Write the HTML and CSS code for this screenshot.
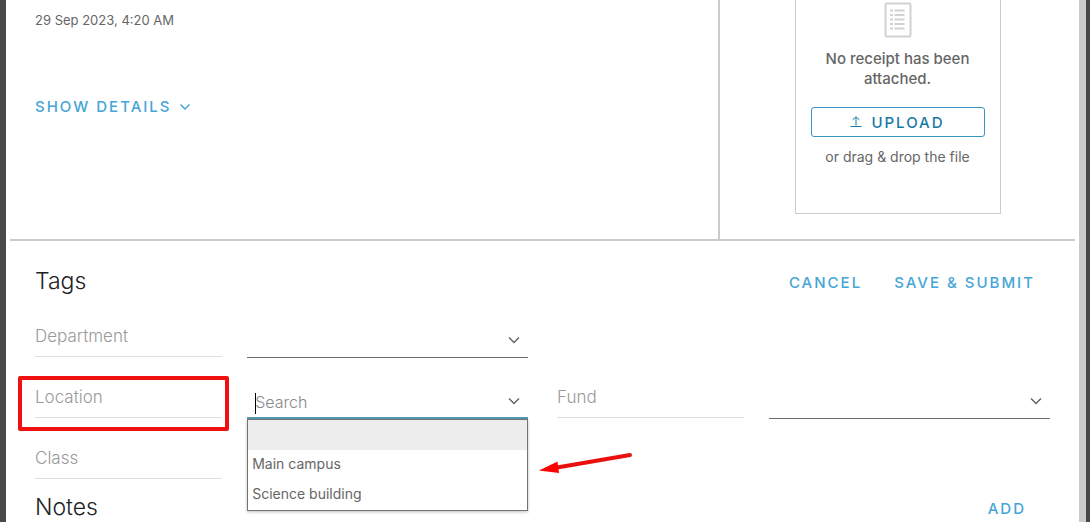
FILE: index.html
```html
<!DOCTYPE html>
<html lang="en">
<head>
  <meta charset="UTF-8">
  <meta name="viewport" content="width=device-width, initial-scale=1.0">
  <title>Transaction details</title>
  <link rel="stylesheet" href="styles.css">
</head>
<body>
  <main class="modal">
    <section class="summary">
      <div class="info">
        <p class="date">29 Sep 2023, 4:20 AM</p>
        <button class="link-btn details-btn" type="button">SHOW DETAILS
          <svg class="details-icon" width="12" height="8" viewBox="0 0 12 8"><path d="M1.500 1.500L6 6l4.500-4.500"/></svg>
        </button>
      </div>
      <div class="receipt-col">
        <div class="receipt">
          <svg class="receipt-icon" width="28" height="36" viewBox="0 0 28 36">
            <rect x="1.5" y="1.5" width="25" height="33" rx="1"/>
            <path d="M6 8.5h3M6 13h3M6 17.5h3M6 22h3M6 26.5h3M10.5 8.5h10M10.5 13h10M10.5 17.5h10M10.5 22h10M10.5 26.5h10"/>
          </svg>
          <p class="receipt-title">No receipt has been attached.</p>
          <button class="upload-btn" type="button">
            <svg width="12" height="12" viewBox="0 0 12 12"><path d="M6 9.5V1M2.5 4L6 .8 9.5 4M.5 10.5h11"/></svg>
            UPLOAD
          </button>
          <p class="receipt-hint">or drag &amp; drop the file</p>
        </div>
      </div>
    </section>

    <section class="tags">
      <header class="section-head">
        <h2>Tags</h2>
        <div class="actions">
          <button class="link-btn" type="button">CANCEL</button>
          <button class="link-btn" type="button">SAVE &amp; SUBMIT</button>
        </div>
      </header>

      <div class="fields">
        <div class="field">
          <label for="department">Department</label>
          <div class="control">
            <select id="department"><option></option></select>
            <svg class="chevron" width="12" height="8" viewBox="0 0 12 8"><path d="M1 1.5l5 5 5-5"/></svg>
          </div>
        </div>

        <div class="field field-location">
          <label for="location" class="marked">Location</label>
          <div class="control open">
            <input id="location" type="text" placeholder="Search" autocomplete="off">
            <span class="caret"></span>
            <svg class="chevron" width="12" height="8" viewBox="0 0 12 8"><path d="M1 1.5l5 5 5-5"/></svg>
            <ul class="menu" role="listbox" aria-label="Location">
              <li class="active" role="option" aria-selected="true"></li>
              <li role="option">Main campus</li>
              <li role="option">Science building</li>
            </ul>
            <svg class="arrow" width="94" height="24" viewBox="0 0 94 24">
              <path class="arrow-line" d="M18 15.5L91 3"/>
              <path class="arrow-head" d="M0 18.5L18.5 9.500L20 21Z"/>
            </svg>
          </div>
        </div>

        <div class="field">
          <label for="fund">Fund</label>
          <div class="control">
            <select id="fund"><option></option></select>
            <svg class="chevron" width="12" height="8" viewBox="0 0 12 8"><path d="M1 1.5l5 5 5-5"/></svg>
          </div>
        </div>

        <div class="field field-class">
          <label for="class">Class</label>
          <div class="control">
            <select id="class"><option></option></select>
          </div>
        </div>
      </div>
    </section>

    <section class="notes">
      <header class="section-head">
        <h2>Notes</h2>
        <div class="actions">
          <button class="link-btn" type="button">ADD</button>
        </div>
      </header>
    </section>
  </main>
</body>
</html>
```

FILE: styles.css
```css
* {
  box-sizing: border-box;
}
body {
  margin: 0;
  height: 100vh;
  overflow: hidden;
  padding: 0 4px 0 6px;
  background: #484848;
  font-family: Inter, "Liberation Sans", sans-serif;
  color: #666;
}
h2, p, ul {
  margin: 0;
  padding: 0;
}
svg {
  fill: none;
  stroke: currentColor;
}
button, input, select {
  font-family: inherit;
}
.modal {
  height: 100vh;
  overflow: hidden;
  padding: 0 4px;
  background: #fff;
  border-right: 7px solid #cbcbcb;
}

/* top part */
.summary {
  display: grid;
  grid-template-columns: 2fr 1fr;
  border-bottom: 2px solid #cbcbcb;
}
.info {
  padding: 11px 25px;
  border-right: 2px solid #cbcbcb;
}
.date {
  font-size: 13px;
  line-height: 18px;
}
.link-btn {
  padding: 0;
  border: 0;
  background: none;
  color: #45a5d6;
  font-size: 15px;
  font-weight: 500;
  line-height: 20px;
  letter-spacing: 2px;
  cursor: pointer;
}
.details-btn {
  display: flex;
  align-items: center;
  gap: 7px;
  margin-top: 68px;
}
.details-icon {
  stroke-width: 1.5;
}
.receipt-col {
  padding: 0 24px 25px;
}
.receipt {
  display: flex;
  flex-direction: column;
  align-items: center;
  max-width: 206px;
  height: 214px;
  margin: 0 auto;
  padding: 2px 15px;
  border: 1px solid #cbcbcb;
  border-top: 0;
  text-align: center;
}
.receipt-icon {
  color: #d2d2d2;
  stroke-width: 2;
}
.receipt-title {
  margin-top: 11px;
  font-size: 15px;
  font-weight: 500;
  line-height: 20px;
}
.upload-btn {
  display: flex;
  align-items: center;
  justify-content: center;
  gap: 9px;
  width: 100%;
  height: 30px;
  margin: 18px 0 10px;
  padding: 0;
  border: 1px solid #3a97c4;
  border-radius: 3px;
  background: #fff;
  color: #1678a5;
  font-size: 15px;
  font-weight: 500;
  letter-spacing: 2px;
  cursor: pointer;
}
.receipt-hint {
  font-size: 14px;
  line-height: 20px;
}

/* tags */
.tags, .notes {
  padding: 0 25px;
}
.section-head {
  display: flex;
  justify-content: space-between;
  align-items: center;
}
.tags .section-head {
  padding-top: 24px;
}
.notes .section-head {
  padding-top: 11px;
}
.section-head h2 {
  color: #222;
  font-size: 23px;
  font-weight: 300;
  line-height: 32px;
}
.actions {
  display: flex;
  gap: 32px;
  padding: 4px 15px 0 0;
}
.notes .actions {
  padding-right: 24px;
}
.fields {
  display: grid;
  grid-template-columns: 1fr 1fr;
  column-gap: 29px;
}
.field {
  display: grid;
  grid-template-columns: 2fr 3fr;
  column-gap: 25px;
  align-items: end;
  height: 61px;
}
.field-location, .field-class {
  grid-column: 1;
}
.field label {
  position: relative;
  margin-bottom: 1px;
  padding-bottom: 8px;
  border-bottom: 1px solid #e0e0e0;
  color: #999;
  font-size: 17px;
  font-weight: 300;
  line-height: 24px;
}
.control {
  position: relative;
}
.control select, .control input {
  display: block;
  width: 100%;
  height: 34px;
  padding: 0 30px 0 8px;
  border: 0;
  border-bottom: 1px solid #6b6e70;
  border-radius: 0;
  outline: 0;
  background: transparent;
  appearance: none;
  font-size: 16px;
  font-weight: 300;
}
.control input::placeholder {
  color: #888;
  opacity: 1;
}
.control.open input {
  padding-top: 2px;
  border-bottom: 2px solid #569bb2;
}
.chevron {
  position: absolute;
  right: 8px;
  top: 12px;
  color: #666;
  stroke-width: 1.5;
  pointer-events: none;
}
.caret {
  position: absolute;
  left: 8px;
  top: 8px;
  width: 1px;
  height: 21px;
  background: #000;
}
.menu {
  position: absolute;
  z-index: 2;
  top: 100%;
  left: 0;
  right: 0;
  border: 1px solid #737373;
  background: #fff;
  box-shadow: 0 1px 3px rgba(0, 0, 0, 0.25);
  list-style: none;
}
.menu li {
  height: 30px;
  padding: 0 4px;
  font-size: 14px;
  line-height: 28px;
}
.menu li.active {
  background: #ededed;
}

/* red marks */
.marked::after {
  content: "";
  position: absolute;
  inset: -9px -7px -14px -17px;
  border: 4px solid #f01010;
  border-radius: 2px;
}
.arrow {
  position: absolute;
  left: calc(100% + 11px);
  top: 67px;
  stroke: none;
}
.arrow-line {
  stroke: #ea1010;
  stroke-width: 4;
  stroke-linecap: round;
}
.arrow-head {
  fill: #ff0000;
}
```
